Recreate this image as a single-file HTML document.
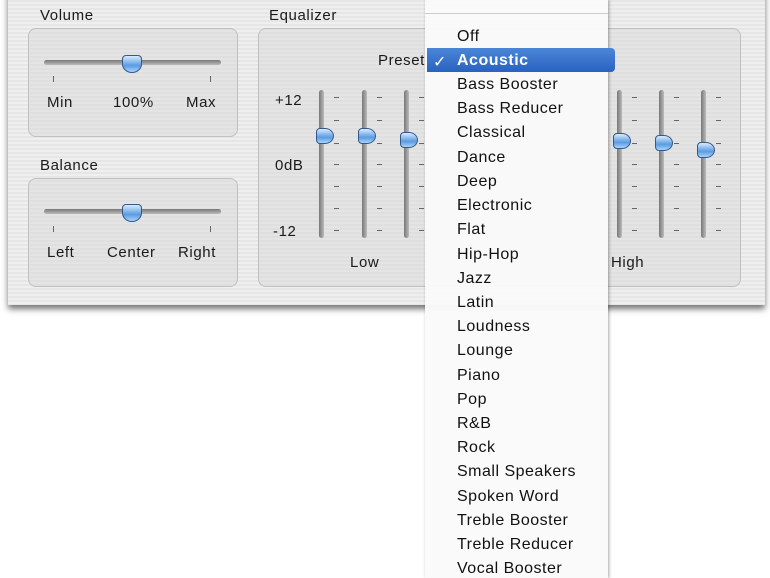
<!DOCTYPE html>
<html><head><style>
body{margin:0;width:770px;height:578px;background:#fff;position:relative;overflow:hidden;font-family:"Liberation Sans","DejaVu Sans",sans-serif;color:#222}
.win{position:absolute;left:8px;top:-10px;width:757px;height:315px;background:repeating-linear-gradient(#efefef 0 2px,#e6e6e6 2px 4px);box-shadow:0 4px 6px rgba(0,0,0,.55)}
.box{position:absolute;border:1px solid #c0c0c0;border-radius:8px;background:rgba(215,215,215,.45)}
.t{position:absolute;font-size:15px;white-space:nowrap;letter-spacing:.6px;color:#1a1a1a}
.htrack{position:absolute;height:5px;border-radius:3px;background:linear-gradient(#777,#bbb)}
.vtrack{position:absolute;width:5px;border-radius:3px;background:linear-gradient(90deg,#777,#bbb);top:90px;height:148px}
.th{position:absolute;width:18px;height:16px;background:linear-gradient(#d8ecff,#5a9be0 60%,#a8d4ff);border:1px solid #35588a;border-radius:4px 4px 50% 50%}
.vth{position:absolute;width:16px;height:14px;background:linear-gradient(#d8ecff,#5a9be0 60%,#a8d4ff);border:1px solid #35588a;border-radius:4px 50% 50% 4px}
.tk{position:absolute;width:1px;height:6px;background:#666}
.dash{position:absolute;width:5px;height:1px;background:#666}
.menu{position:absolute;left:425px;top:0;width:183px;height:578px;background:rgba(250,250,250,.96);box-shadow:1px 0 3px rgba(0,0,0,.35)}
.mi{position:absolute;left:32px;font-size:16px;white-space:nowrap;color:#111;letter-spacing:.5px}
</style></head><body>
<div class="win">
<div class="t" style="left:32px;top:17px">Volume</div>
<div class="t" style="left:261px;top:17px">Equalizer</div>
<div class="box" style="left:20px;top:38px;width:208px;height:107px"></div>
<div class="t" style="left:32px;top:167px">Balance</div>
<div class="box" style="left:20px;top:188px;width:208px;height:107px"></div>
<div class="box" style="left:250px;top:38px;width:481px;height:257px"></div>
</div>
<div class="htrack" style="left:44px;top:60px;width:177px"></div>
<div class="th" style="left:122px;top:55px"></div>
<div class="tk" style="left:53px;top:76px"></div><div class="tk" style="left:210px;top:76px"></div>
<div class="t" style="left:47px;top:94px">Min</div><div class="t" style="left:113px;top:94px">100%</div><div class="t" style="left:186px;top:94px">Max</div>
<div class="htrack" style="left:44px;top:209px;width:177px"></div>
<div class="th" style="left:122px;top:204px"></div>
<div class="tk" style="left:53px;top:226px"></div><div class="tk" style="left:210px;top:226px"></div>
<div class="t" style="left:47px;top:244px">Left</div><div class="t" style="left:107px;top:244px">Center</div><div class="t" style="left:178px;top:244px">Right</div>
<div class="t" style="left:378px;top:52px">Preset</div>
<div class="t" style="left:275px;top:92px">+12</div><div class="t" style="left:275px;top:157px">0dB</div><div class="t" style="left:273px;top:223px">-12</div>
<div class="t" style="left:350px;top:254px">Low</div><div class="t" style="left:611px;top:254px">High</div>
<div class="vtrack" style="left:319px"></div><div class="vtrack" style="left:362px"></div><div class="vtrack" style="left:404px"></div>
<div class="vtrack" style="left:617px"></div><div class="vtrack" style="left:659px"></div><div class="vtrack" style="left:701px"></div>
<div class="vth" style="left:316px;top:128px"></div><div class="vth" style="left:358px;top:128px"></div><div class="vth" style="left:400px;top:132px"></div>
<div class="vth" style="left:613px;top:133px"></div><div class="vth" style="left:655px;top:135px"></div><div class="vth" style="left:697px;top:142px"></div>
<div id="d"></div>
<div class="menu">
<div style="position:absolute;left:0;right:0;top:13px;height:1px;background:#ccc"></div>
<div style="position:absolute;left:2px;width:188px;top:48px;height:24px;background:linear-gradient(#4a86d8,#2a62c0);border-radius:0 4px 4px 0"></div>
<div class="mi" style="left:8px;top:52px;color:#fff;font-weight:bold">✓</div>
<div class="mi" style="top:28px">Off</div>
<div class="mi" style="top:52px;color:#fff;font-weight:bold">Acoustic</div>
<div class="mi" style="top:76px">Bass Booster</div>
<div class="mi" style="top:100px">Bass Reducer</div>
<div class="mi" style="top:124px">Classical</div>
<div class="mi" style="top:149px">Dance</div>
<div class="mi" style="top:173px">Deep</div>
<div class="mi" style="top:197px">Electronic</div>
<div class="mi" style="top:221px">Flat</div>
<div class="mi" style="top:246px">Hip-Hop</div>
<div class="mi" style="top:270px">Jazz</div>
<div class="mi" style="top:294px">Latin</div>
<div class="mi" style="top:318px">Loudness</div>
<div class="mi" style="top:342px">Lounge</div>
<div class="mi" style="top:367px">Piano</div>
<div class="mi" style="top:391px">Pop</div>
<div class="mi" style="top:415px">R&amp;B</div>
<div class="mi" style="top:439px">Rock</div>
<div class="mi" style="top:463px">Small Speakers</div>
<div class="mi" style="top:488px">Spoken Word</div>
<div class="mi" style="top:512px">Treble Booster</div>
<div class="mi" style="top:536px">Treble Reducer</div>
<div class="mi" style="top:560px">Vocal Booster</div>
</div>
<script>
var h='',xs=[334,377,419,632,674,716],ys=[97,120,143,164,186,208,230];
xs.forEach(function(x){ys.forEach(function(y){h+='<div class="dash" style="left:'+x+'px;top:'+y+'px"></div>'})});
document.getElementById('d').innerHTML=h;
</script>
</body></html>
